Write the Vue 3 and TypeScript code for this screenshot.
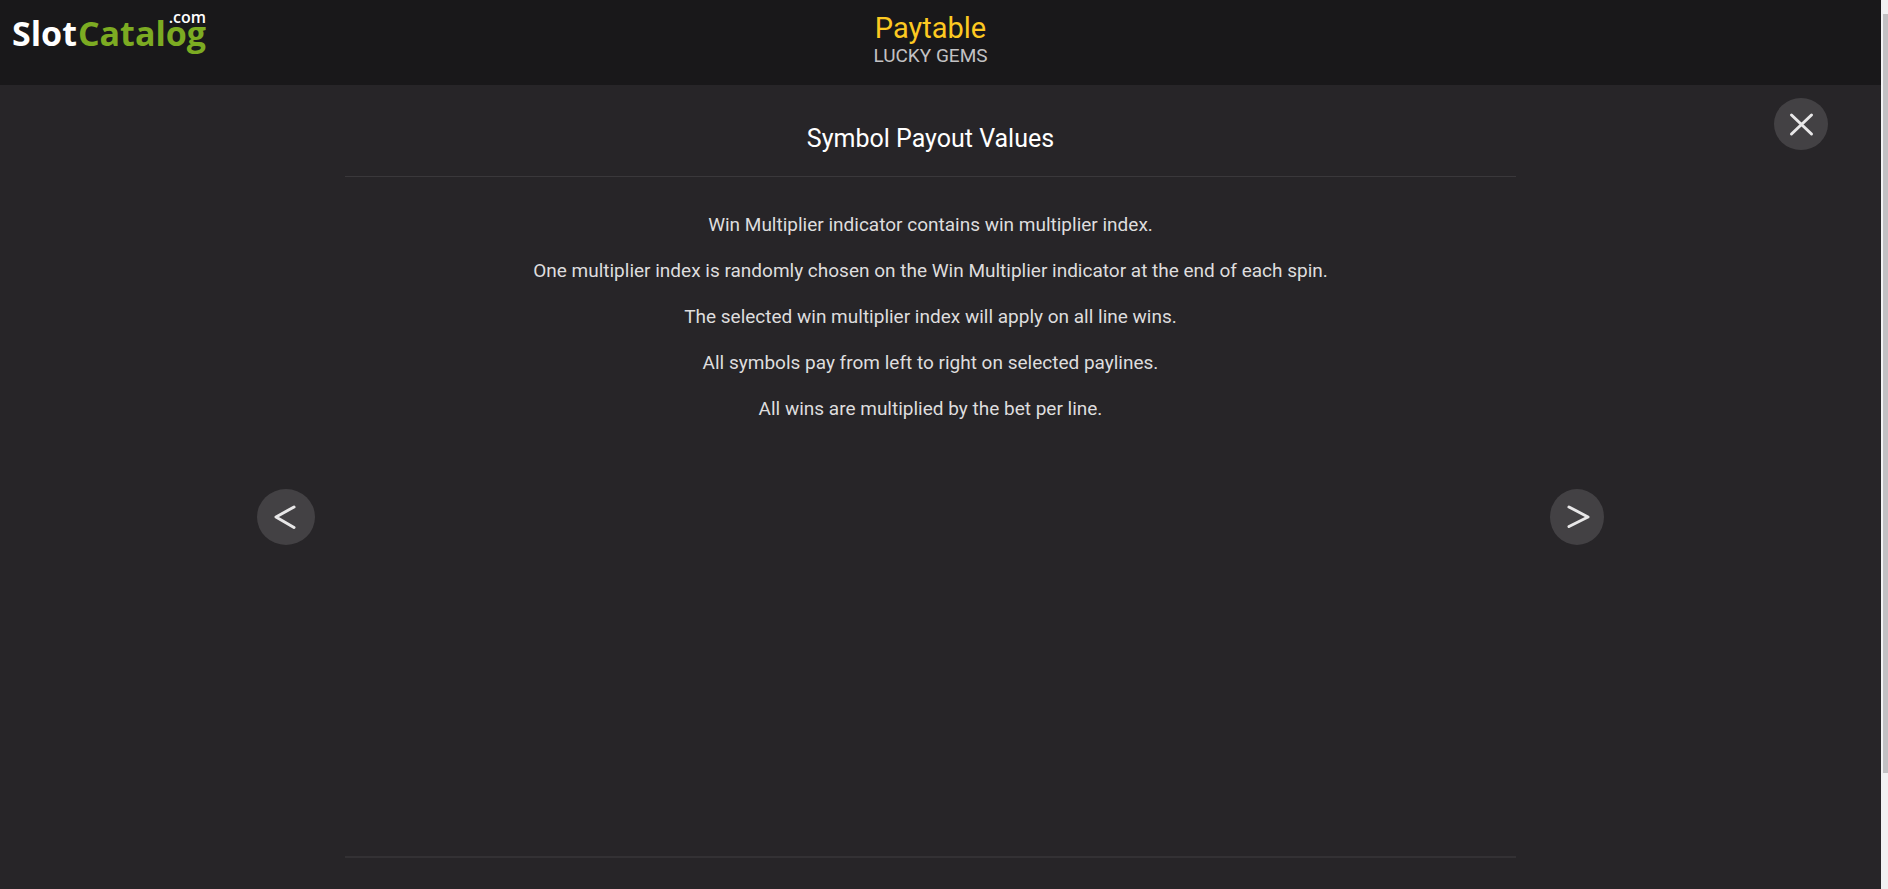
<script setup lang="ts">
const rules: string[] = [
  'Win Multiplier indicator contains win multiplier index.',
  'One multiplier index is randomly chosen on the Win Multiplier indicator at the end of each spin.',
  'The selected win multiplier index will apply on all line wins.',
  'All symbols pay from left to right on selected paylines.',
  'All wins are multiplied by the bet per line.',
]
</script>

<template>
  <div class="window">
    <div class="page">
      <header class="topbar">
        <a class="logo" href="#" aria-label="SlotCatalog.com">
          <span class="slot">Slot</span><span class="catalog">Catalog</span><span class="domain">.com</span>
        </a>
        <div class="titles">
          <h1>Paytable</h1>
          <p>LUCKY GEMS</p>
        </div>
      </header>

      <main class="sheet">
        <h2>Symbol Payout Values</h2>
        <button class="round close" type="button" aria-label="Close">
          <svg viewBox="0 0 54 52"><path d="M17.5 17l20 19M37.5 17l-20 19" /></svg>
        </button>
        <button class="round prev" type="button" aria-label="Previous page">
          <svg viewBox="0 0 58 56"><path d="M37 18L19 28l18 10.5" /></svg>
        </button>
        <section class="rules">
          <p v-for="rule in rules" :key="rule">{{ rule }}</p>
        </section>
        <button class="round next" type="button" aria-label="Next page">
          <svg viewBox="0 0 54 56"><path d="M19 18l19 10-19 9.5" /></svg>
        </button>
      </main>
    </div>
    <div class="scrollbar" aria-hidden="true">
      <div class="thumb"></div>
    </div>
  </div>
</template>

<style>
body {
  margin: 0;
  background: #272528;
}
</style>

<style scoped>
.window {
  display: flex;
  min-height: 100vh;
  font-family: Roboto, "Liberation Sans", sans-serif;
  background: #272528;
}
.page {
  flex: 1;
  min-width: 0;
  display: flex;
  flex-direction: column;
}
.topbar {
  position: relative;
  box-sizing: border-box;
  min-height: 85px;
  padding: 12px 20px 12px 0;
  background: #19181a;
}
.logo {
  position: absolute;
  left: 12px;
  top: 10px;
  display: flex;
  font-family: "Open Sans", "Noto Sans", sans-serif;
  font-size: 34px;
  font-weight: 700;
  line-height: 46px;
  text-decoration: none;
  color: #fff;
}
.catalog {
  margin-left: 1px;
  color: #7cab22;
}
.domain {
  position: absolute;
  right: 0;
  top: 0;
  font-size: 16px;
  font-weight: 600;
  line-height: 14px;
}
.titles {
  text-align: center;
}
h1,
h2,
p {
  margin: 0;
  font-weight: 400;
}
h1 {
  font-size: 29px;
  line-height: 32px;
  color: #fdc921;
}
.titles p {
  font-size: 19px;
  line-height: 24px;
  color: #c3c2c4;
}
.sheet {
  flex: 1;
  display: grid;
  grid-template-columns: 1fr 3.4fr 1fr;
  grid-template-rows: 91px 1fr;
  padding: 0 20px 31px 0;
}
h2 {
  grid-column: 2;
  padding-top: 34px;
  font-size: 25px;
  line-height: 40px;
  text-align: center;
  color: #fff;
}
.rules {
  grid-column: 2;
  grid-row: 2;
  padding-top: 36px;
  border-top: 1px solid #3a383b;
  border-bottom: 2px solid #333134;
  text-align: center;
}
.rules p {
  margin-bottom: 22px;
  font-size: 19px;
  line-height: 24px;
  color: #deddde;
}
.round {
  padding: 0;
  border: 0;
  border-radius: 50%;
  background: #434144;
  cursor: pointer;
}
.round svg {
  display: block;
  width: 100%;
  height: 100%;
  fill: none;
  stroke: #e8e7e8;
  stroke-width: 3;
  stroke-linecap: round;
  stroke-linejoin: round;
}
.close {
  grid-column: 3;
  grid-row: 1;
  justify-self: end;
  width: 54px;
  height: 52px;
  margin: 13px 33px 0 0;
}
.prev {
  grid-column: 1;
  grid-row: 2;
  place-self: center end;
  width: 58px;
  height: 56px;
  margin-right: 30px;
}
.next {
  grid-column: 3;
  grid-row: 2;
  place-self: center start;
  width: 54px;
  height: 56px;
  margin-left: 34px;
}
.scrollbar {
  box-sizing: border-box;
  width: 7px;
  padding: 14px 0 0 2px;
  background: #f1f0f2;
}
.thumb {
  height: calc(100vh - 130px);
  background: #c2c0c3;
}
</style>
